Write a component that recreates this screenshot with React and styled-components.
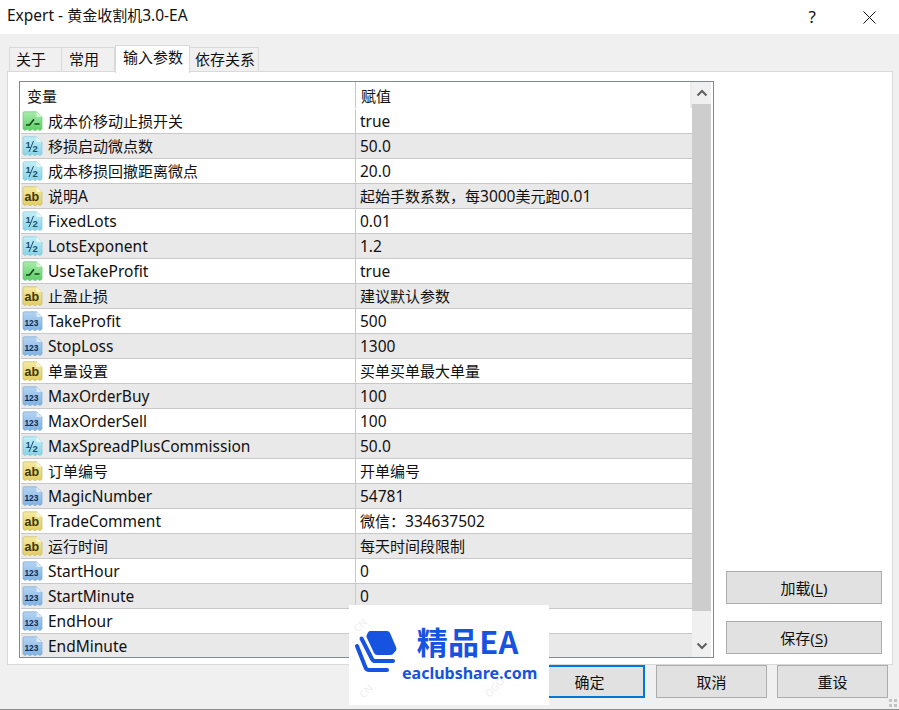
import React from 'react';
import styled, { createGlobalStyle } from 'styled-components';

const Global = createGlobalStyle`
  html, body { margin: 0; padding: 0; background: #f0f0f0; }
  * { box-sizing: border-box; }
`;

const Window = styled.div`
  position: relative;
  width: 899px;
  height: 710px;
  overflow: hidden;
  background: #f0f0f0;
  border-bottom: 1px solid #8c8c8c;
  font-family: "Noto Sans", "Noto Sans CJK SC", sans-serif;
  font-size: 15px;
  color: #111;
  display: flex;
  flex-direction: column;
`;
const TitleBar = styled.div`
  height: 34px;
  flex: none;
  background: #fff;
  display: flex;
  align-items: center;
  padding-left: 7px;
  padding-bottom: 4px;
  justify-content: space-between;
`;
const TitleControls = styled.div`
  display: flex;
  align-items: center;
  gap: 47px;
  padding-right: 23px;
  padding-top: 4px;
`;
const Help = styled.span`
  font-size: 17px;
  line-height: 16px;
`;
const TabRow = styled.div`
  flex: none;
  height: 38px;
  display: flex;
  align-items: flex-end;
  padding-left: 9px;
  position: relative;
  z-index: 1;
`;
const Tab = styled.div`
  width: ${p => p.$w}px;
  height: ${p => (p.$active ? 28 : 25)}px;
  margin-bottom: ${p => (p.$active ? -1 : 0)}px;
  background: ${p => (p.$active ? '#fff' : '#f0f0f0')};
  border: 1px solid #d9d9d9;
  border-bottom: ${p => (p.$active ? 'none' : '1px solid #d9d9d9')};
  border-left: ${p => (p.$first || p.$active ? '1px solid #d9d9d9' : 'none')};
  padding-left: ${p => p.$pad}px;
  line-height: 22px;
  white-space: nowrap;
`;
const Panel = styled.div`
  flex: none;
  margin-left: 7px;
  width: 886px;
  height: 594px;
  margin-top: -1px;
  background: #fff;
  border: 1px solid #d9d9d9;
  padding: 9px 10px 0 11px;
  display: flex;
  gap: 12px;
`;
const Table = styled.div`
  width: 695px;
  height: 577px;
  flex: none;
  border: 1px solid #828790;
  display: flex;
  background: #fff;
  overflow: hidden;
`;
const Grid = styled.div`
  width: 671px;
  flex: none;
  margin-left: 1px;
  display: flex;
  flex-direction: column;
`;
const HeaderRow = styled.div`
  height: 26px;
  flex: none;
  display: flex;
  align-items: center;
  margin-bottom: 1px;
  border-right: 2px solid #ececec;
`;
const Row = styled.div`
  height: 25px;
  flex: none;
  display: flex;
  align-items: center;
  background: ${p => (p.$alt ? '#e9e9e9' : '#fff')};
  border-bottom: 1px solid #c8c8c8;
`;
const NameCell = styled.div`
  width: 335px;
  flex: none;
  height: 100%;
  display: flex;
  align-items: center;
  gap: 5px;
  padding-left: ${p => (p.$head ? 6 : 1)}px;
  border-right: 1px solid #c8c8c8;
  white-space: nowrap;
`;
const ValueCell = styled.div`
  padding-left: ${p => (p.$head ? 5 : 4)}px;
  white-space: nowrap;
  display: flex;
  align-items: center;
`;
const Label = styled.span`
  padding-bottom: ${p => (p.$cjk ? 2 : 0)}px;
`;
const Latin = styled.span`
  font-size: 15.5px;
`;
const ScrollBar = styled.div`
  width: 19px;
  flex: none;
  background: #f0f0f0;
  display: flex;
  flex-direction: column;
  align-items: center;
`;
const ScrollButton = styled.div`
  height: ${p => p.$h}px;
  flex: none;
  width: 100%;
  display: flex;
  align-items: center;
  justify-content: center;
`;
const ScrollThumb = styled.div`
  height: 507px;
  flex: none;
  width: 100%;
  background: #cdcdcd;
`;
const ScrollTrack = styled.div`
  flex: 1;
`;
const SideButtons = styled.div`
  padding-top: 490px;
  display: flex;
  flex-direction: column;
  gap: 17px;
`;
const Button = styled.div`
  width: ${p => p.$w}px;
  height: 33px;
  background: #e1e1e1;
  border: ${p => (p.$primary ? '2px solid #0078d7' : '1px solid #adadad')};
  margin-right: ${p => (p.$primary ? 1 : 0)}px;
  display: flex;
  align-items: center;
  justify-content: center;
  white-space: nowrap;
`;
const Key = styled.span`
  text-decoration: underline;
  text-underline-offset: 2px;
`;
const Footer = styled.div`
  flex: none;
  display: flex;
  gap: 10px;
  padding-left: 534px;
`;
const Gripper = styled.svg`
  position: absolute;
  right: 2px;
  bottom: 2px;
`;
const Watermark = styled.div`
  position: absolute;
  left: 349px;
  top: 605px;
  width: 200px;
  height: 100px;
  background: #fff;
  overflow: hidden;
  display: flex;
  align-items: flex-start;
  padding: 26px 0 0 6px;
`;
const BrandText = styled.div`
  display: flex;
  flex-direction: column;
  align-items: center;
  margin-left: 3px;
  margin-top: -8px;
  color: #1553e0;
  font-family: "Noto Sans CJK SC", "Noto Sans", sans-serif;
  font-weight: 700;
`;
const BrandName = styled.div`
  font-size: 31px;
  line-height: 36px;
  letter-spacing: 0.3px;
  margin-right: 4px;
`;
const BrandUrl = styled.div`
  font-family: "Noto Sans", sans-serif;
  font-size: 16px;
  line-height: 18px;
  margin-top: 5px;
`;
const Ghost = styled.span`
  position: absolute;
  left: ${p => p.$x}px;
  top: ${p => p.$y}px;
  transform: rotate(-45deg);
  color: #eeeeee;
  font-size: 10px;
  line-height: 12px;
`;

const palette = {
  bool: { top: '#a8ecaa', bottom: '#5ccf66', edge: '#6cc873', ink: '#14491a', fold: '#d6f5d6' },
  num: { top: '#c2eff7', bottom: '#86d2e6', edge: '#84c8dc', ink: '#1b4f6e', fold: '#e6f8fc' },
  str: { top: '#f4eaa0', bottom: '#e2cd62', edge: '#cdbb5c', ink: '#3f3508', fold: '#faf5d2' },
  int: { top: '#b4d4f2', bottom: '#7fb1e2', edge: '#80aad6', ink: '#0c2a52', fold: '#dceafa' },
};

const ParamIcon = ({ kind }) => {
  const c = palette[kind];
  const gid = `g-${kind}`;
  const sans = 'Liberation Sans, sans-serif';
  return (
    <svg width="21" height="21" viewBox="0 0 21 21" style={{ flex: 'none' }}>
      <defs>
        <linearGradient id={gid} x1="0" y1="0" x2="0" y2="1">
          <stop offset="0" stopColor={c.top} />
          <stop offset="1" stopColor={c.bottom} />
        </linearGradient>
      </defs>
      <path
        d="M1 2 Q1 0.8 2.2 0.8 H14.5 L20 6 V18 L18 19.5 L15.5 18.2 L13 19.8 L10.5 18.2 L8 19.8 L5.5 18.2 L3 19.5 L1 18 Z"
        fill={`url(#${gid})`}
        stroke={c.edge}
        strokeWidth="0.7"
      />
      <path d="M14.5 0.8 V6 H20 Z" fill={c.fold} />
      {kind === 'bool' && (
        <path d="M4 14 H7.5 L12 8.2 M12.5 13 H17.5" fill="none" stroke={c.ink} strokeWidth="1.7" />
      )}
      {kind === 'num' && (
        <>
          <text x="3.6" y="11.5" fontSize="9.5" fontWeight="700" fontFamily={sans} fill={c.ink}>1</text>
          <path d="M7 16 L11.5 5" stroke={c.ink} strokeWidth="1" />
          <text x="10.5" y="16" fontSize="9.5" fontWeight="700" fontFamily={sans} fill={c.ink}>2</text>
        </>
      )}
      {kind === 'str' && (
        <text x="2.6" y="14.5" fontSize="12.5" fontWeight="700" fontFamily={sans} fill={c.ink}>ab</text>
      )}
      {kind === 'int' && (
        <text x="2.4" y="14.5" fontSize="8.4" fontWeight="700" fontFamily={sans} fill={c.ink}>123</text>
      )}
    </svg>
  );
};

const Chevron = ({ up }) => (
  <svg width="12" height="8" viewBox="0 0 12 8">
    <path d={up ? 'M1.5 6.5 L6 2 L10.5 6.5' : 'M1.5 1.5 L6 6 L10.5 1.5'} fill="none" stroke="#606060" strokeWidth="2" />
  </svg>
);

const Logo = () => (
  <svg width="44" height="44" viewBox="0 0 44 44" style={{ flex: 'none' }}>
    <path
      d="M13 1.5 Q13.5 0 15 0 H32 Q34 0 35 2 L41 16 Q42 18 41 19.5 L38 23 Q37 24 35 24 H22 Q20 24 19 22 L11.5 6 Q11 4.5 13 1.5 Z"
      fill="#1553e0"
    />
    <path d="M6.5 7.5 L17 28 Q18 30 20 30 H38" fill="none" stroke="#1553e0" strokeWidth="4" strokeLinecap="round" />
    <path d="M2 15 L10.5 36.5 Q11.5 39 14 39 H32" fill="none" stroke="#1553e0" strokeWidth="4" strokeLinecap="round" />
  </svg>
);

const rows = [
  ['bool', '成本价移动止损开关', 'true'],
  ['num', '移损启动微点数', '50.0'],
  ['num', '成本移损回撤距离微点', '20.0'],
  ['str', '说明A', '起始手数系数，每3000美元跑0.01'],
  ['num', 'FixedLots', '0.01'],
  ['num', 'LotsExponent', '1.2'],
  ['bool', 'UseTakeProfit', 'true'],
  ['str', '止盈止损', '建议默认参数'],
  ['int', 'TakeProfit', '500'],
  ['int', 'StopLoss', '1300'],
  ['str', '单量设置', '买单买单最大单量'],
  ['int', 'MaxOrderBuy', '100'],
  ['int', 'MaxOrderSell', '100'],
  ['num', 'MaxSpreadPlusCommission', '50.0'],
  ['str', '订单编号', '开单编号'],
  ['int', 'MagicNumber', '54781'],
  ['str', 'TradeComment', '微信：334637502'],
  ['str', '运行时间', '每天时间段限制'],
  ['int', 'StartHour', '0'],
  ['int', 'StartMinute', '0'],
  ['int', 'EndHour', '0'],
  ['int', 'EndMinute', '0'],
];

const Mixed = ({ text }) =>
  text.split(/([\x20-\x7e]+)/).map((run, i) =>
    i % 2 === 1 ? <Latin key={i}>{run}</Latin> : run
  );

const CellText = ({ text }) => (
  <Label $cjk={!/[\x20-\x7e]/.test(text)}>
    <Mixed text={text} />
  </Label>
);

export default function App() {
  return (
    <Window>
      <Global />
      <TitleBar>
        <span><Mixed text="Expert - 黄金收割机3.0-EA" /></span>
        <TitleControls>
          <Help>?</Help>
          <svg width="13" height="13" viewBox="0 0 13 13">
            <path d="M0.5 0.5 L12.5 12.5 M12.5 0.5 L0.5 12.5" stroke="#111" strokeWidth="1" />
          </svg>
        </TitleControls>
      </TitleBar>
      <TabRow>
        <Tab $w={53} $pad={6} $first>关于</Tab>
        <Tab $w={53} $pad={7}>常用</Tab>
        <Tab $w={75} $pad={7} $active>输入参数</Tab>
        <Tab $w={69} $pad={5}>依存关系</Tab>
      </TabRow>
      <Panel>
        <Table>
          <Grid>
            <HeaderRow>
              <NameCell $head>变量</NameCell>
              <ValueCell $head>赋值</ValueCell>
            </HeaderRow>
            {rows.map(([kind, name, value], i) => (
              <Row key={name} $alt={i % 2 === 1}>
                <NameCell>
                  <ParamIcon kind={kind} />
                  <CellText text={name} />
                </NameCell>
                <ValueCell><CellText text={value} /></ValueCell>
              </Row>
            ))}
          </Grid>
          <ScrollBar>
            <ScrollButton $h={22}><Chevron up /></ScrollButton>
            <ScrollThumb />
            <ScrollTrack />
            <ScrollButton $h={22}><Chevron /></ScrollButton>
          </ScrollBar>
        </Table>
        <SideButtons>
          <Button $w={156}><span>加载(<Key>L</Key>)</span></Button>
          <Button $w={156}><span>保存(<Key>S</Key>)</span></Button>
        </SideButtons>
      </Panel>
      <Footer>
        <Button $w={111} $primary>确定</Button>
        <Button $w={111}>取消</Button>
        <Button $w={111}>重设</Button>
      </Footer>
      <Gripper width="8" height="8" viewBox="0 0 8 8">
        <path d="M0 0h3v3H0zM5 0h3v3H5zM0 5h3v3H0zM5 5h3v3H5z" fill="#c4c4c4" />
      </Gripper>
      <Watermark>
        <Ghost $x={4} $y={14}>CN</Ghost>
        <Ghost $x={10} $y={80}>CN</Ghost>
        <Ghost $x={134} $y={76}>OGO</Ghost>
        <Logo />
        <BrandText>
          <BrandName>精品EA</BrandName>
          <BrandUrl>eaclubshare.com</BrandUrl>
        </BrandText>
      </Watermark>
    </Window>
  );
}
